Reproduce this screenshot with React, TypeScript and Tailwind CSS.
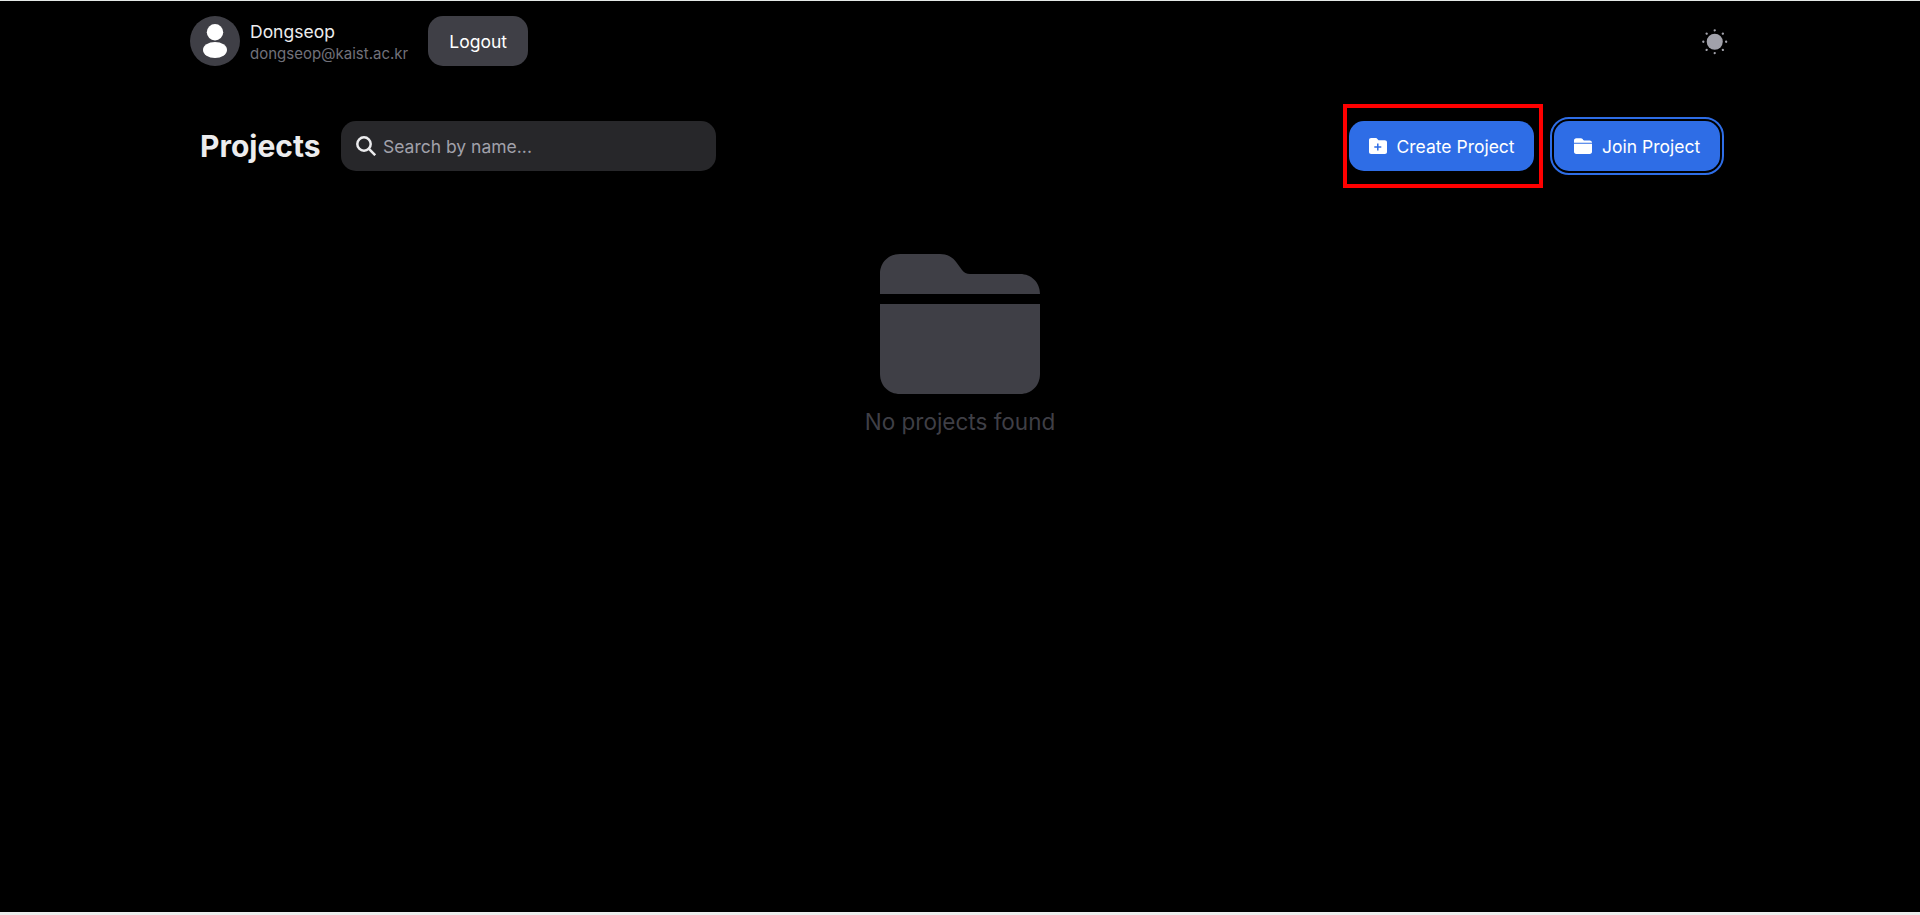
import React from "react";

function AvatarIcon() {
  return (
    <svg viewBox="0 0 50 50" className="size-[50px]" fill="white" aria-hidden="true">
      <circle cx="25" cy="16.2" r="8.2" />
      <ellipse cx="25" cy="34" rx="12" ry="8" />
    </svg>
  );
}

function SunIcon() {
  return (
    <svg viewBox="0 0 24 24" className="size-[27.5px]" fill="currentColor" aria-hidden="true">
      <path d="M19 12a7 7 0 11-7-7 7 7 0 017 7z" />
      <path d="M12 22.96a.969.969 0 01-1-.96v-.08a1 1 0 012 0 1.038 1.038 0 01-1 1.04zm7.14-2.82a1.024 1.024 0 01-.71-.29l-.13-.13a1 1 0 011.41-1.41l.13.13a1 1 0 010 1.41.984.984 0 01-.7.29zm-14.28 0a1.024 1.024 0 01-.71-.29 1 1 0 010-1.41l.13-.13a1 1 0 011.41 1.41l-.13.13a1 1 0 01-.7.29zM22 13h-.08a1 1 0 010-2 1.038 1.038 0 011.04 1 .969.969 0 01-.96 1zM2.08 13H2a1 1 0 010-2 1.038 1.038 0 011.04 1 .969.969 0 01-.96 1zm16.93-7.01a1.024 1.024 0 01-.71-.29 1 1 0 010-1.41l.13-.13a1 1 0 011.41 1.41l-.13.13a.984.984 0 01-.7.29zm-14.02 0a1.024 1.024 0 01-.71-.29l-.13-.14a1 1 0 011.41-1.41l.13.13a1 1 0 010 1.41.97.97 0 01-.7.3zM12 3.04a.969.969 0 01-1-.96V2a1 1 0 012 0 1.038 1.038 0 01-1 1.04z" />
    </svg>
  );
}

function FolderIcon({ className }: { className: string }) {
  return (
    <svg viewBox="0 0 160 140" className={className} fill="currentColor" aria-hidden="true">
      <path d="M0 40V20C0 8.500 8.500 0 20 0H60C67.500 0 72.500 3 76.500 8.500L82 16C84 18.700 86.500 20 90 20H140C151.500 20 160 28.500 160 40Z" />
      <path d="M0 50H160V120C160 131.500 151.500 140 140 140H20C8.500 140 0 131.500 0 120Z" />
    </svg>
  );
}

function FolderPlusIcon() {
  return (
    <svg viewBox="0 0 18 16" className="h-4 w-[18px]" aria-hidden="true">
      <path fill="white" d="M2.200 0H6.200C7.500 0 8 .4 8.600 1.200L9.500 2.200H15.700C17.200 2.200 18 3 18 4.400V13.800C18 15.200 17.200 16 15.800 16H2.200C.8 16 0 15.200 0 13.800V2.200C0 .8 .8 0 2.200 0Z" />
      <path stroke="#2e6de6" strokeWidth="1.5" d="M8.800 5.500V12.500M5.300 9H12.300" />
    </svg>
  );
}

export default function App() {
  return (
    <div className="flex h-[915px] w-full flex-col overflow-hidden border-t border-[#e4e8e6] bg-black font-['Inter',sans-serif] text-[#ececee]">
      <div className="mx-auto flex w-[1540px] flex-1 flex-col pt-[15px]">
        <header className="flex h-[50px] items-center">
          <div className="size-[50px] rounded-full bg-[#3f3f46]">
            <AvatarIcon />
          </div>
          <div className="ml-2.5 flex flex-col">
            <span className="text-[17.5px] leading-[25px]">Dongseop</span>
            <span className="text-[15px] leading-[20px] text-[#71717a]">dongseop@kaist.ac.kr</span>
          </div>
          <button className="ml-5 h-[50px] w-[100px] rounded-[15px] bg-[#3f3f46] pt-0.5 text-[17.5px] text-white">Logout</button>
          <div className="ml-auto mr-[1.5px] pt-[1.5px] text-[#a1a1aa]">
            <SunIcon />
          </div>
        </header>

        <div className="mt-[38px] flex h-[84px] items-center pl-2.5 pr-2.5">
          <h1 className="w-[141px] text-[30px] font-bold leading-[40px]">Projects</h1>
          <label className="flex h-[50px] w-[375px] items-center rounded-[15px] bg-[#27272a] pl-[15px]">
            <svg viewBox="0 0 20 20" className="size-5 shrink-0" fill="none" stroke="currentColor" strokeWidth="2.5" aria-hidden="true">
              <circle cx="8" cy="8" r="6.700" />
              <path d="M12.700 12.700L19.200 19.200" />
            </svg>
            <input
              className="ml-[7px] w-[300px] bg-transparent pt-[2.5px] text-[17.5px] outline-none placeholder:text-[#a1a1aa]"
              placeholder="Search by name..."
            />
          </label>
          <div className="ml-auto flex items-center">
            <div className="mr-[11px] flex h-[84px] w-[200px] items-center border-4 border-[#ff0000] pl-[2px]">
              <button className="flex h-[50px] w-[185px] items-center rounded-[15px] bg-[#2e6de6] pl-5 text-[17.5px] text-white">
                <FolderPlusIcon />
                <span className="ml-[9.5px] whitespace-nowrap pt-[2.5px]">Create Project</span>
              </button>
            </div>
            <button className="flex h-[50px] w-[166px] items-center rounded-[15px] bg-[#2e6de6] pl-5 text-[17.5px] text-white outline-2 outline-offset-2 outline-[#2e6de6]">
              <FolderIcon className="h-4 w-[18px]" />
              <span className="ml-2.5 whitespace-nowrap pt-[2.5px]">Join Project</span>
            </button>
          </div>
        </div>

        <main className="mt-[66px] flex flex-col items-center text-[#3f3f46]">
          <FolderIcon className="h-[140px] w-[160px]" />
          <p className="mt-[10px] text-[22.5px] leading-[35px]">No projects found</p>
        </main>
      </div>
      <div className="h-[3px] bg-[#ececec]" />
    </div>
  );
}
